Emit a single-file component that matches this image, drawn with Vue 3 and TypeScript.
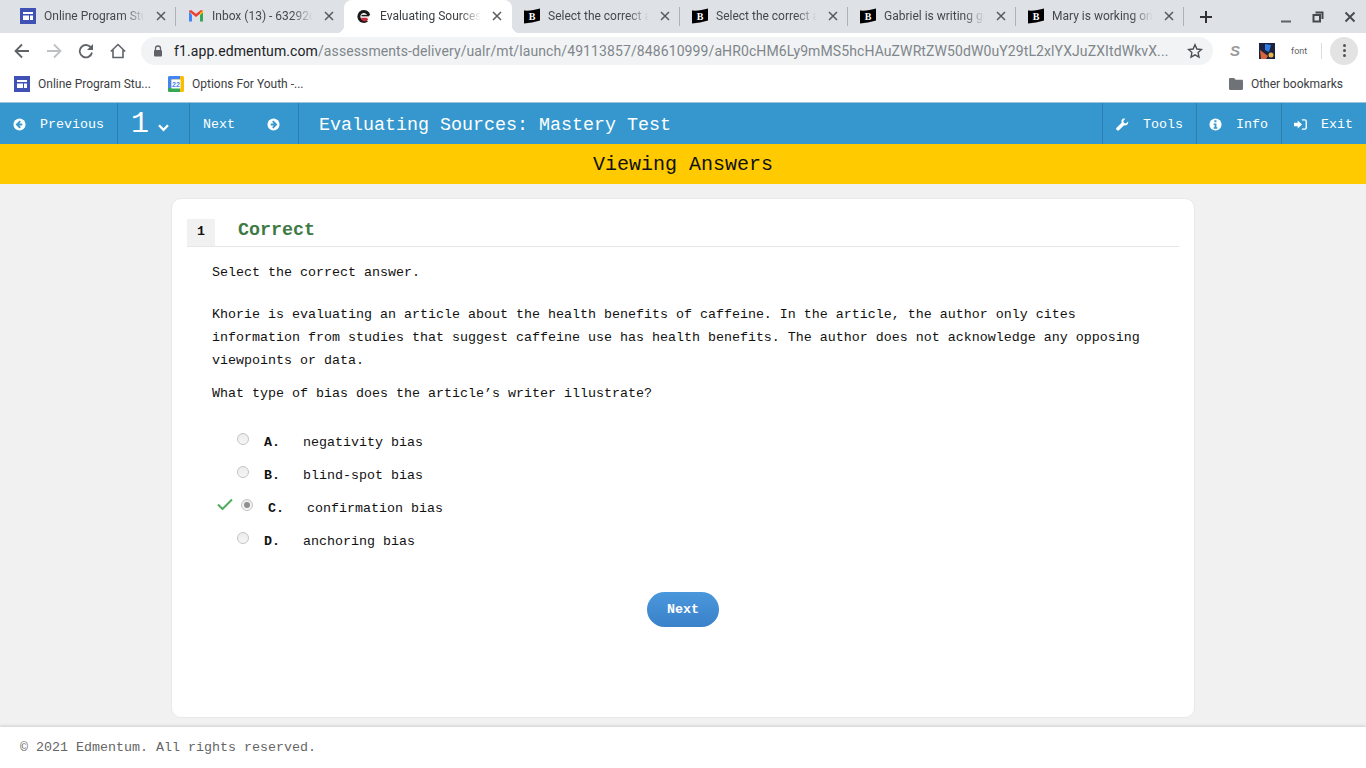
<script setup lang="ts">
const tabs = [
  { title: 'Online Program Student', icon: 'site' },
  { title: 'Inbox (13) - 63292d@gmail', icon: 'gmail' },
  { title: 'Evaluating Sources: Mastery', icon: 'edm' },
  { title: 'Select the correct answer', icon: 'bart' },
  { title: 'Select the correct answer', icon: 'bart' },
  { title: 'Gabriel is writing guidelines', icon: 'bart' },
  { title: 'Mary is working on a paper', icon: 'bart' }
]
const activeTab = 2

const choices = [
  { letter: 'A.', text: 'negativity bias', picked: false },
  { letter: 'B.', text: 'blind-spot bias', picked: false },
  { letter: 'C.', text: 'confirmation bias', picked: true },
  { letter: 'D.', text: 'anchoring bias', picked: false }
]
</script>

<template>
  <div class="page">
    <div class="tabstrip">
      <div
        v-for="(tab, i) in tabs"
        :key="i"
        class="tab"
        :class="{ active: i === activeTab, sep: i !== activeTab && i !== activeTab - 1 }"
      >
        <svg v-if="tab.icon === 'site'" class="fav" viewBox="0 0 16 16">
          <rect width="16" height="16" fill="#3f51b5" />
          <path d="M3 4h10v2H3zM3 7.500h6V12H3zM10 7.500h3V12h-3z" fill="#fff" />
        </svg>
        <svg v-else-if="tab.icon === 'gmail'" class="fav" viewBox="0 0 16 16">
          <path d="M1 3.500v10h3V7z" fill="#4285f4" />
          <path d="M15 3.500v10h-3V7z" fill="#34a853" />
          <path d="M1 3.500 8 9l7-5.500V2.800L13 2 8 5.800 3 2l-2 .8z" fill="#ea4335" />
          <path d="M12 4.800 15 2.600v2L12 7z" fill="#fbbc04" />
        </svg>
        <svg v-else-if="tab.icon === 'edm'" class="fav" viewBox="0 0 16 16">
          <path d="M12.800 7.600A5 5 0 1 0 11 12.400" stroke="#1a1a1a" stroke-width="3" fill="none" />
          <path d="M5.500 7.600h7.500" stroke="#1a1a1a" stroke-width="1.500" />
          <path d="M4.800 9.800h6.400l.8 2-2 1.500H7z" fill="#c9283a" />
        </svg>
        <svg v-else class="fav" viewBox="0 0 16 16">
          <path d="M0 2.500c5 .5 11-.5 16-2v12c-5 1.500-11 2.500-16 3z" fill="#000" />
          <text x="8" y="11.500" text-anchor="middle" class="bart-b">B</text>
        </svg>
        <span class="tab-title">{{ tab.title }}</span>
        <svg class="close" viewBox="0 0 16 16">
          <path d="M4 4l8 8M12 4l-8 8" stroke="#56595d" stroke-width="1.500" fill="none" />
        </svg>
      </div>
      <svg class="plus" viewBox="0 0 14 14">
        <path d="M7 1v12M1 7h12" stroke="#2f3134" stroke-width="2" fill="none" />
      </svg>
      <div class="win-buttons">
        <svg viewBox="0 0 12 12"><path d="M1 10.500h10" stroke="#5f6368" stroke-width="2" /></svg>
        <svg viewBox="0 0 12 12">
          <path d="M3.500 1.500h7v6.500M1.500 4h6.500v6.500H1.500z" stroke="#45484c" stroke-width="2" fill="none" />
        </svg>
        <svg viewBox="0 0 12 12">
          <path d="M1.500 1.500l9 9M10.500 1.500l-9 9" stroke="#45484c" stroke-width="1.800" fill="none" />
        </svg>
      </div>
    </div>

    <div class="toolbar">
      <svg class="nav" viewBox="0 0 16 16">
        <path d="M15 8H2M8 1.500 1.500 8 8 14.500" stroke="#5f6368" stroke-width="1.800" fill="none" />
      </svg>
      <svg class="nav" viewBox="0 0 16 16">
        <path d="M1 8h13M8 1.500 14.500 8 8 14.500" stroke="#bdc1c6" stroke-width="1.800" fill="none" />
      </svg>
      <svg class="nav" viewBox="0 0 16 16">
        <path d="M13.500 5.500A6.200 6.200 0 1 0 14 9.500" stroke="#5f6368" stroke-width="1.800" fill="none" />
        <path d="M15 1v6H9z" fill="#5f6368" />
      </svg>
      <svg class="nav" viewBox="0 0 16 16">
        <path d="M.8 8.500 8 1.500l7.200 7M3 7v7.500h10V7" stroke="#5f6368" stroke-width="1.600" fill="none" />
      </svg>
      <div class="omnibox">
        <svg class="lock" viewBox="0 0 10 12">
          <path d="M2.500 5V3.500a2.500 2.500 0 0 1 5 0V5" stroke="#5f6368" stroke-width="1.300" fill="none" />
          <rect x="1" y="5" width="8" height="6.500" rx="1" fill="#5f6368" />
        </svg>
        <span class="url"><b>f1.app.edmentum.com</b>/assessments-delivery/ualr/mt/launch/49113857/848610999/aHR0cHM6Ly9mMS5hcHAuZWRtZW50dW0uY29tL2xlYXJuZXItdWkvX...</span>
        <svg class="star" viewBox="0 0 16 16">
          <path d="M8 1.800l1.900 4.200 4.600.5-3.400 3.100.9 4.500L8 11.800l-4 2.300.9-4.500L1.500 6.500l4.600-.5z" stroke="#4b4e52" stroke-width="1.400" fill="none" />
        </svg>
      </div>
      <span class="ext-s">S</span>
      <svg class="ext-img" viewBox="0 0 16 16">
        <rect width="16" height="16" fill="#1c2340" />
        <path d="M6 1l6 1-2 7-4-2z" fill="#2f7de1" />
        <path d="M1 7l8 6-2 3H2z" fill="#d9653b" />
        <circle cx="12" cy="12" r="2.500" fill="#e8b64c" />
      </svg>
      <span class="ext-font">font</span>
      <div class="tool-sep"></div>
      <div class="menu">
        <i></i><i></i><i></i>
      </div>
    </div>

    <div class="bookmarks">
      <svg class="bm-icon" viewBox="0 0 16 16">
        <rect width="16" height="16" fill="#3f51b5" />
        <path d="M3 4h10v2H3zM3 7.500h6V12H3zM10 7.500h3V12h-3z" fill="#fff" />
      </svg>
      <span class="bm-first">Online Program Stu...</span>
      <svg class="bm-icon" viewBox="0 0 16 16">
        <rect width="16" height="16" rx="1.500" fill="#fbbc04" />
        <path d="M0 12h12v4H1.500A1.500 1.500 0 0 1 0 14.500z" fill="#34a853" />
        <path d="M0 12V1.500A1.500 1.500 0 0 1 1.500 0H12v3.500H3.500V12z" fill="#4285f4" />
        <rect x="3.500" y="3.500" width="9" height="9" fill="#fff" />
        <text x="8" y="10.800" text-anchor="middle" class="cal-num">22</text>
      </svg>
      <span>Options For Youth -...</span>
      <svg class="folder" viewBox="0 0 14 12">
        <path d="M0 1.200C0 .5.500 0 1.200 0h4l1.400 1.700h6.200c.7 0 1.200.5 1.200 1.200v7.900c0 .7-.5 1.200-1.200 1.200H1.200C.5 12 0 11.500 0 10.800z" fill="#6f7276" />
      </svg>
      <span class="bm-other">Other bookmarks</span>
    </div>

    <header class="appbar">
      <div class="seg prev">
        <svg class="fa" viewBox="0 0 14 14">
          <circle cx="7" cy="7" r="6.500" fill="#fff" />
          <path d="M7.800 3.400 4.200 7l3.600 3.600M4.500 7h5.500" stroke="#3597ce" stroke-width="2" fill="none" />
        </svg>
        <span>Previous</span>
      </div>
      <div class="seg number">
        <span class="big">1</span>
        <svg class="chev" viewBox="0 0 14 10">
          <path d="M2 2.500l5 5 5-5" stroke="#fff" stroke-width="2.600" fill="none" />
        </svg>
      </div>
      <div class="seg next">
        <span>Next</span>
        <svg class="fa" viewBox="0 0 14 14">
          <circle cx="7" cy="7" r="6.500" fill="#fff" />
          <path d="M6.200 3.400 9.800 7l-3.600 3.600M9.500 7H4" stroke="#3597ce" stroke-width="2" fill="none" />
        </svg>
      </div>
      <div class="title">Evaluating Sources: Mastery Test</div>
      <div class="seg tools">
        <svg class="fa" viewBox="0 0 14 14">
          <path d="M13 3.800 10.800 6 8.500 5.300 7.900 3.100 10 .9C8.300.2 6.600 1 6 2.400c-.4 1-.3 2 .1 2.700L.6 10.600c-.6.600-.6 1.500 0 2.100l.5.500c.6.600 1.500.6 2.100 0l5.500-5.500c1.500.6 3.200.1 4-1.200.5-.8.600-1.800.3-2.700z" fill="#fff" />
        </svg>
        <span>Tools</span>
      </div>
      <div class="seg info">
        <svg class="fa" viewBox="0 0 14 14">
          <circle cx="7" cy="7" r="6.500" fill="#fff" />
          <path d="M5.800 2.500h2.200v2H5.800zM5 6h3v4h1v1.500H5V10h1V7.500H5z" fill="#3597ce" />
        </svg>
        <span>Info</span>
      </div>
      <div class="seg exit">
        <svg class="fa" viewBox="0 0 14 14">
          <path d="M0 5.200h4V2.600L8.600 7 4 11.400V8.800H0z" fill="#fff" />
          <path d="M8.500 2h3c1 0 1.700.7 1.700 1.700v6.600c0 1-.7 1.700-1.700 1.700h-3" stroke="#fff" stroke-width="1.500" fill="none" />
        </svg>
        <span>Exit</span>
      </div>
    </header>

    <div class="banner">Viewing Answers</div>

    <main class="content">
      <section class="card">
        <div class="q-head">
          <span class="q-num">1</span>
          <h2>Correct</h2>
        </div>
        <div class="q-body">
          <p class="prompt">Select the correct answer.</p>
          <p class="passage">
            Khorie is evaluating an article about the health benefits of caffeine. In the article, the author only cites information from studies that suggest caffeine use has health benefits. The author does not acknowledge any opposing viewpoints or data.
          </p>
          <p class="ask">What type of bias does the article’s writer illustrate?</p>
          <div class="choices">
            <div v-for="c in choices" :key="c.letter" class="choice" :class="{ picked: c.picked }">
              <span class="mark">
                <svg v-if="c.picked" class="check" viewBox="0 0 16 12">
                  <path d="M1 6.500 5.500 11 15 1.500" stroke="#4cae5c" stroke-width="2" fill="none" />
                </svg>
              </span>
              <span class="radio"><i v-if="c.picked"></i></span>
              <b class="letter">{{ c.letter }}</b>
              <span>{{ c.text }}</span>
            </div>
          </div>
          <div class="actions">
            <button class="next-btn">Next</button>
          </div>
        </div>
      </section>
    </main>

    <footer class="foot">© 2021 Edmentum. All rights reserved.</footer>
  </div>
</template>

<style scoped>
.page {
  width: 1366px;
  height: 768px;
  overflow: hidden;
  display: flex;
  flex-direction: column;
  background: #f1f1f1;
  font-family: "Liberation Mono", monospace;
  font-size: 13.33px;
  color: #111;
}

/* browser chrome */
.tabstrip {
  height: 33px;
  background: #dee1e6;
  display: flex;
  align-items: center;
  padding-left: 8px;
  font-family: Roboto, sans-serif;
  font-size: 12px;
  color: #45484c;
}
.tab {
  position: relative;
  width: 168px;
  height: 33px;
  flex: none;
  display: flex;
  align-items: center;
  padding: 0 7px 2px 12px;
  box-sizing: border-box;
}
.tab.sep::after {
  content: "";
  position: absolute;
  right: 0;
  top: 7px;
  height: 19px;
  width: 1px;
  background: #aeb1b6;
}
.tab.active {
  background: #fff;
  border-radius: 8px 8px 0 0;
  color: #3c4043;
}
.tab.active::before,
.tab.active::after {
  content: "";
  position: absolute;
  bottom: 0;
  width: 8px;
  height: 8px;
}
.tab.active::before {
  left: -8px;
  background: radial-gradient(circle at 0 0, transparent 8px, #fff 8.5px);
}
.tab.active::after {
  right: -8px;
  background: radial-gradient(circle at 100% 0, transparent 8px, #fff 8.5px);
}
.fav {
  width: 16px;
  height: 16px;
  flex: none;
  margin-right: 8px;
}
.bart-b {
  font: 900 10px "Liberation Serif", serif;
  fill: #fff;
}
.cal-num {
  font: 700 7px "Liberation Sans", sans-serif;
  fill: #4285f4;
}
.tab-title {
  flex: 1;
  min-width: 0;
  white-space: nowrap;
  overflow: hidden;
  -webkit-mask-image: linear-gradient(to right, #000 76%, transparent 96%);
  mask-image: linear-gradient(to right, #000 76%, transparent 96%);
}
.close {
  width: 16px;
  height: 16px;
  flex: none;
  margin-left: 4px;
}
.plus {
  width: 14px;
  height: 14px;
  margin-left: 15px;
  flex: none;
}
.win-buttons {
  margin-left: auto;
  display: flex;
  gap: 20px;
  padding-right: 10px;
  align-items: center;
}
.win-buttons svg {
  width: 12px;
  height: 12px;
}

.toolbar {
  height: 35px;
  background: #fff;
  display: flex;
  align-items: center;
  padding-left: 14px;
  font-family: Roboto, sans-serif;
}
.nav {
  width: 16px;
  height: 16px;
  flex: none;
  margin-right: 16px;
}
.nav:nth-child(4) {
  margin-right: 15px;
}
.omnibox {
  width: 1072px;
  height: 28px;
  flex: none;
  box-sizing: border-box;
  border-radius: 14px;
  background: #f1f3f4;
  display: flex;
  align-items: center;
  padding: 0 10px 0 12px;
}
.lock {
  width: 10px;
  height: 12px;
  flex: none;
  margin-right: 11px;
}
.url {
  flex: 1;
  min-width: 0;
  white-space: nowrap;
  overflow: hidden;
  font-size: 14px;
  letter-spacing: 0.1px;
  color: #80868b;
}
.url b {
  font-weight: 400;
  color: #202124;
}
.star {
  width: 16px;
  height: 16px;
  flex: none;
  margin-left: 17px;
}
.ext-s {
  margin-left: 17px;
  width: 10px;
  font: italic 700 15px "Liberation Sans", sans-serif;
  color: #9a9a9a;
}
.ext-img {
  width: 16px;
  height: 16px;
  flex: none;
  margin-left: 19px;
}
.ext-font {
  margin-left: 16px;
  font-size: 9px;
  color: #5f6368;
}
.tool-sep {
  width: 1px;
  height: 16px;
  background: #dadce0;
  margin-left: 14px;
}
.menu {
  width: 28px;
  height: 28px;
  border-radius: 50%;
  background: #e3e3e3;
  margin-left: 8px;
  display: flex;
  flex-direction: column;
  align-items: center;
  justify-content: center;
  gap: 2px;
}
.menu i {
  width: 3px;
  height: 3px;
  border-radius: 50%;
  background: #505458;
}

.bookmarks {
  height: 34px;
  box-sizing: border-box;
  padding: 0 0 2px 14px;
  background: #fff;
  display: flex;
  align-items: center;
  font-family: Roboto, sans-serif;
  font-size: 12px;
  color: #3c4043;
}
.bm-icon {
  width: 16px;
  height: 16px;
  flex: none;
  margin-right: 8px;
}
.bm-first {
  width: 130px;
}
.folder {
  width: 14px;
  height: 12px;
  flex: none;
  margin-left: auto;
  margin-right: 8px;
}
.bm-other {
  padding-right: 23px;
}

/* app header */
.appbar {
  height: 42px;
  box-sizing: border-box;
  flex: none;
  display: flex;
  align-items: stretch;
  background: #3597ce;
  border-top: 1px solid #9cc3d9;
  color: #fff;
}
.seg {
  display: flex;
  align-items: center;
  box-sizing: border-box;
  border-right: 1px solid #2a7fb0;
  flex: none;
  padding-top: 1px;
}
.fa {
  width: 13px;
  height: 13px;
  flex: none;
}
.prev {
  width: 118px;
  padding-left: 13px;
  gap: 14px;
}
.number {
  width: 72px;
  padding-left: 13px;
}
.big {
  font-size: 30px;
  line-height: 1;
  margin-top: -1px;
}
.chev {
  width: 13px;
  height: 9px;
  margin-left: 8px;
  margin-top: 7px;
}
.next {
  width: 109px;
  padding-left: 13px;
  justify-content: flex-start;
}
.next .fa {
  margin-left: 32px;
}
.title {
  flex: 1;
  padding: 2px 0 0 20px;
  font-size: 18.33px;
  line-height: 42px;
  height: 39px;
}
.tools {
  width: 95px;
  padding-left: 13px;
  gap: 14px;
  border-left: 1px solid #2a7fb0;
}
.info {
  width: 85px;
  padding-left: 12px;
  gap: 14px;
}
.exit {
  width: 84px;
  padding-left: 12px;
  gap: 14px;
  border-right: 0;
}

.banner {
  height: 40px;
  flex: none;
  background: #ffcb00;
  text-align: center;
  font-size: 20px;
  line-height: 41px;
  color: #111;
}

.content {
  flex: 1;
  min-height: 0;
  padding: 14px 171px 9px 171px;
}
.card {
  height: 100%;
  box-sizing: border-box;
  background: #fff;
  border: 1px solid #e9e9e9;
  border-radius: 10px;
  padding: 20px 15px 0 15px;
}
.q-head {
  display: flex;
  align-items: stretch;
  height: 27px;
  border-bottom: 1px solid #e6e6e6;
}
.q-num {
  width: 28px;
  background: #f1f1f1;
  font-weight: 700;
  text-align: center;
  line-height: 23px;
  padding-top: 1px;
}
.q-head h2 {
  margin: 0 0 0 23px;
  font-size: 18.33px;
  line-height: 24px;
  font-weight: 700;
  color: #3f7a45;
}
.q-body {
  padding: 0 25px 0 25px;
}
p {
  margin: 0;
  line-height: 23px;
}
.prompt {
  margin-top: 14px;
}
.passage {
  margin-top: 19px;
}
.ask {
  margin-top: 10px;
}
.choices {
  margin-top: 21px;
}
.choice {
  height: 33px;
  display: flex;
  align-items: center;
}
.mark {
  width: 25px;
  flex: none;
  display: flex;
}
.picked .mark {
  width: 29px;
}
.check {
  width: 16px;
  height: 12px;
  margin: -10px 0 0 5px;
}
.radio {
  width: 12px;
  height: 12px;
  flex: none;
  box-sizing: border-box;
  border: 1px solid #c4c4c4;
  border-radius: 50%;
  background: linear-gradient(#ececec, #f6f6f6);
  margin-top: -7px;
  display: flex;
  align-items: center;
  justify-content: center;
}
.radio i {
  width: 6px;
  height: 6px;
  border-radius: 50%;
  background: #8f8f8f;
}
.letter {
  width: 39px;
  margin-left: 15px;
  flex: none;
}
.actions {
  display: flex;
  justify-content: center;
  margin-top: 34px;
}
.next-btn {
  width: 72px;
  height: 35px;
  border: 0;
  border-radius: 18px;
  background: linear-gradient(#4a97dc, #3a81c9);
  color: #fff;
  font-family: inherit;
  font-size: 13.33px;
  font-weight: 700;
}

.foot {
  height: 41px;
  flex: none;
  background: #fff;
  box-shadow: 0 -1px 3px rgba(0, 0, 0, 0.15);
  padding-left: 20px;
  line-height: 41px;
  color: #666;
}
</style>
